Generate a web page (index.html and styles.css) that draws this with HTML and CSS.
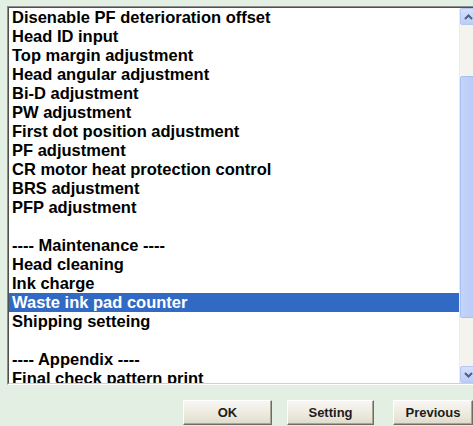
FILE: index.html
```html
<!DOCTYPE html>
<html>
<head>
<meta charset="utf-8">
<link rel="stylesheet" href="styles.css">
</head>
<body>
<div class="window">
  <div class="listbox">
    <div class="listbox-inner">
      <ul class="items">
        <li>Disenable PF deterioration offset</li>
        <li>Head ID input</li>
        <li>Top margin adjustment</li>
        <li>Head angular adjustment</li>
        <li>Bi-D adjustment</li>
        <li>PW adjustment</li>
        <li>First dot position adjustment</li>
        <li>PF adjustment</li>
        <li>CR motor heat protection control</li>
        <li>BRS adjustment</li>
        <li>PFP adjustment</li>
        <li class="blank"></li>
        <li>---- Maintenance ----</li>
        <li>Head cleaning</li>
        <li>Ink charge</li>
        <li class="selected">Waste ink pad counter</li>
        <li>Shipping setteing</li>
        <li class="blank"></li>
        <li>---- Appendix ----</li>
        <li>Final check pattern print</li>
      </ul>
      <div class="scrollbar">
        <div class="sb-btn">
          <svg width="9" height="6" viewBox="0 0 9 6"><path d="M1 5 L4.5 1.5 L8 5" fill="none" stroke="#4d6185" stroke-width="2"/></svg>
        </div>
        <div class="track"><div class="thumb"></div></div>
        <div class="sb-btn">
          <svg width="9" height="6" viewBox="0 0 9 6"><path d="M1 1 L4.5 4.5 L8 1" fill="none" stroke="#4d6185" stroke-width="2"/></svg>
        </div>
      </div>
    </div>
  </div>
  <div class="buttons">
    <button class="btn btn-ok">OK</button>
    <button class="btn btn-setting">Setting</button>
    <button class="btn btn-prev">Previous</button>
  </div>
</div>
</body>
</html>
```

FILE: styles.css
```css
html, body {
  margin: 0;
  height: 100%;
  overflow: hidden;
  background: #e3efe2;
}
.window {
  padding: 6px 0 0 7px;
  width: 490px;
}
.listbox {
  width: 469px;
  border: 1px solid;
  border-color: #8c8c8c #ffffff #ffffff #8c8c8c;
}
.listbox-inner {
  display: flex;
  height: 375px;
  background: #ffffff;
  border: 1px solid;
  border-color: #505050 #d4d0c8 #d4d0c8 #505050;
  overflow: hidden;
}
.items {
  list-style: none;
  margin: 0;
  padding: 0;
  width: 450px;
  flex: none;
  overflow: hidden;
  font-family: "Liberation Sans", Arial, sans-serif;
  font-weight: bold;
  font-size: 16.5px;
  color: #000;
}
.items li {
  height: 19px;
  line-height: 19px;
  padding-left: 3px;
  white-space: nowrap;
}
.items li.selected {
  background: #316ac5;
  color: #ffffff;
}
.scrollbar {
  width: 17px;
  flex: none;
  display: flex;
  flex-direction: column;
  background: #f4f3ee;
  border-left: 1px solid #eeede5;
  box-sizing: border-box;
}
.sb-btn {
  height: 17px;
  flex: none;
  display: flex;
  align-items: center;
  justify-content: center;
  background: linear-gradient(#d4e0fd, #bccdf6);
  border: 1px solid #b6c8f1;
  border-radius: 2px;
  box-sizing: border-box;
}
.track {
  flex: 1;
  padding-top: 51px;
}
.thumb {
  height: 242px;
  background: linear-gradient(90deg, #c4d4fa, #b9cbf5);
  border: 1px solid #a9bff0;
  border-radius: 2px;
  box-sizing: border-box;
}
.buttons {
  display: flex;
  margin-top: 15px;
  padding-left: 176px;
}
.btn {
  height: 25px;
  padding: 0;
  font-family: "Liberation Sans", Arial, sans-serif;
  font-weight: bold;
  font-size: 13px;
  color: #1c1c1c;
  background: linear-gradient(#f7f6f1, #e9e6da 70%, #dedacb);
  border: 1px solid;
  border-color: #ffffff #6f6d62 #6f6d62 #ffffff;
  box-shadow: inset -1px -1px 0 #a8a595;
}
.btn-ok { width: 89px; }
.btn-setting { width: 87px; margin-left: 15px; }
.btn-prev { width: 80px; margin-left: 19px; }
```
